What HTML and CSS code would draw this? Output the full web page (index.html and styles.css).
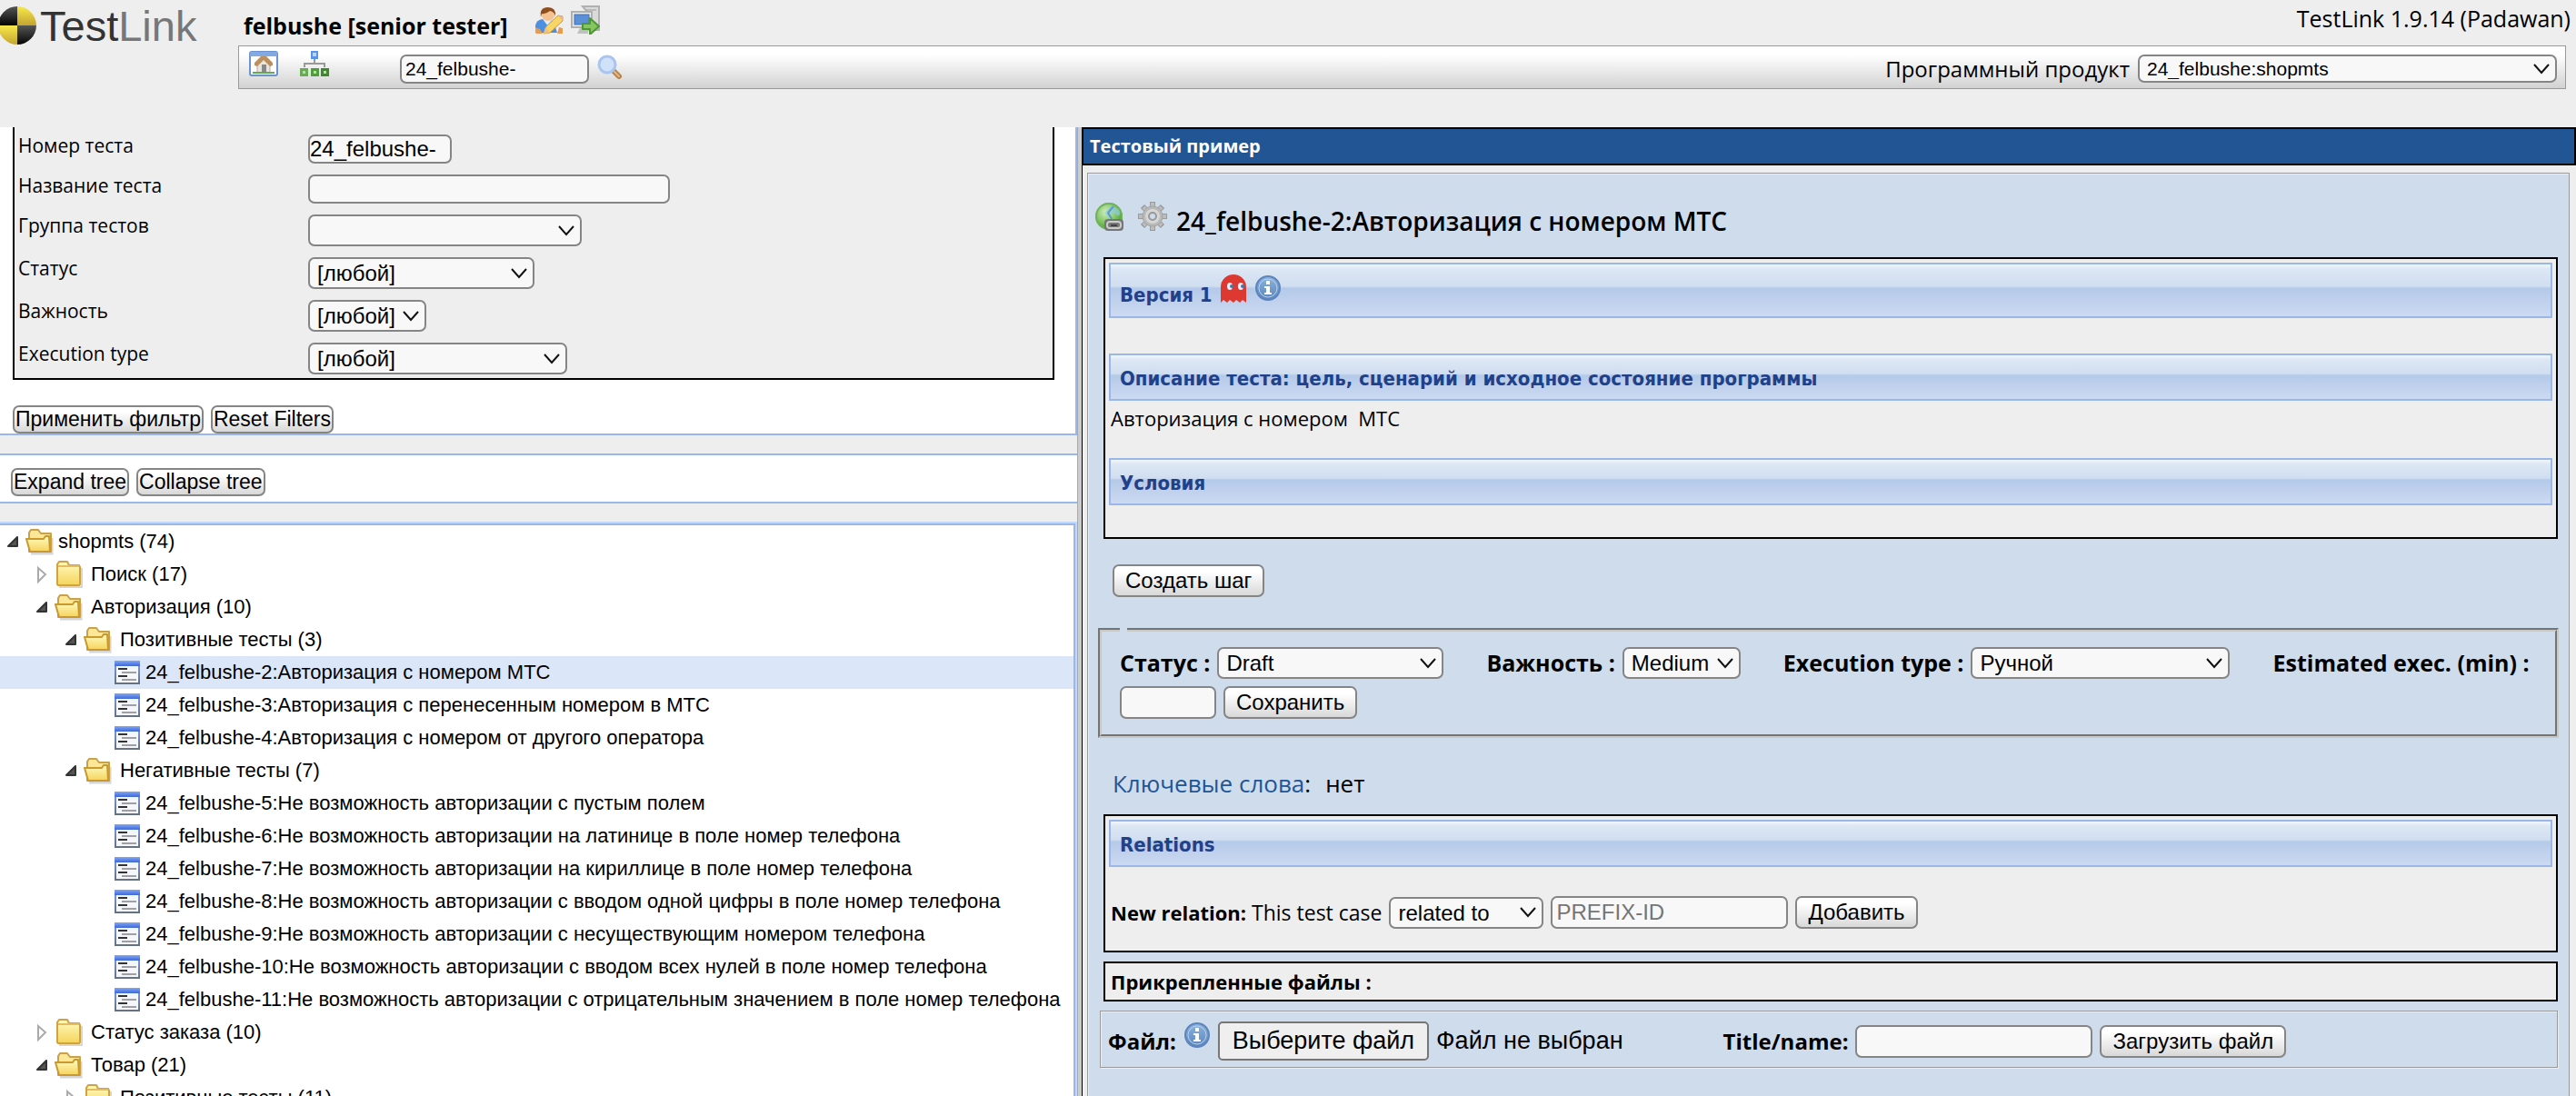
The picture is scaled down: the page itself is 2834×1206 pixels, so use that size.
FILE: index.html
```html
<!DOCTYPE html>
<html lang="ru">
<head>
<meta charset="utf-8">
<title>TestLink 1.9.14 (Padawan)</title>
<link rel="stylesheet" href="styles.css">
</head>
<body>
<svg class="sprite" aria-hidden="true">
  <defs>
    <linearGradient id="g-yellow" x1="0" y1="0" x2="0" y2="1"><stop offset="0" stop-color="#f7e94a"/><stop offset="1" stop-color="#c3a431"/></linearGradient>
    <linearGradient id="g-black" x1="0" y1="0" x2="0" y2="1"><stop offset="0" stop-color="#555"/><stop offset="1" stop-color="#050505"/></linearGradient>
    <linearGradient id="g-folder" x1="0" y1="0" x2="0" y2="1"><stop offset="0" stop-color="#fffbc0"/><stop offset="1" stop-color="#f5d45c"/></linearGradient>
    <linearGradient id="g-blue" x1="0" y1="0" x2="0" y2="1"><stop offset="0" stop-color="#7fa8f5"/><stop offset="1" stop-color="#3f68d8"/></linearGradient>
    <linearGradient id="g-side" x1="0" y1="0" x2="0" y2="1"><stop offset="0" stop-color="#7f9fe6"/><stop offset="1" stop-color="#64707f"/></linearGradient>
    <linearGradient id="g-info" x1="0" y1="0" x2="0" y2="1"><stop offset="0" stop-color="#8db4dd"/><stop offset="1" stop-color="#5a84bd"/></linearGradient>
    <radialGradient id="g-globe" cx=".4" cy=".35" r=".7"><stop offset="0" stop-color="#d5f0c4"/><stop offset=".6" stop-color="#79bf5c"/><stop offset="1" stop-color="#3f8a34"/></radialGradient>
    <symbol id="i-open" viewBox="0 0 32 32">
      <path d="M6 29h23V12" fill="none" stroke="#bbb" stroke-width="3" opacity=".6"/>
      <path d="M4 27V6l2-3h8l3 4h11v20z" fill="#fbe795" stroke="#c9a14a" stroke-width="2" stroke-linejoin="round"/>
      <path d="M1 13h19l2-3h4l1 17H5z" fill="url(#g-folder)" stroke="#c9992e" stroke-width="2" stroke-linejoin="round"/>
    </symbol>
    <symbol id="i-closed" viewBox="0 0 32 32">
      <path d="M5 30h25V9" fill="none" stroke="#bbb" stroke-width="2" opacity=".6"/>
      <path d="M3 27V5l2-3h9l2 4h11l1 2v19l-1 1H4z" fill="url(#g-folder)" stroke="#cfa245" stroke-width="2" stroke-linejoin="round"/>
      <path d="M4 7h23" stroke="#e3bb62" stroke-width="2"/>
    </symbol>
    <symbol id="i-case" viewBox="0 0 32 28">
      <rect x="2" y="1" width="28" height="26" fill="url(#g-side)"/>
      <rect x="4" y="7" width="24" height="18" fill="#f3f6fb"/>
      <rect x="2" y="1" width="28" height="6" fill="url(#g-blue)"/>
      <path d="M6 10h10M6 18h10" stroke="#333" stroke-width="2"/>
      <path d="M10 14h16M10 22h16" stroke="#a0a0a0" stroke-width="2"/>
    </symbol>
    <symbol id="i-expanded" viewBox="0 0 32 32"><path d="M19 11v10H9z" fill="#555" stroke="#333" stroke-width="2" stroke-linejoin="round"/></symbol>
    <symbol id="i-collapsed" viewBox="0 0 32 32"><path d="M10 9v15l8-8z" fill="#fff" stroke="#aaa" stroke-width="2"/></symbol>
    <symbol id="i-info" viewBox="0 0 30 30">
      <circle cx="15" cy="15" r="13" fill="url(#g-info)" stroke="#5c85bd" stroke-width="2"/>
      <circle cx="15" cy="15" r="10" fill="none" stroke="#b9d2ec" stroke-width="1"/>
      <path d="M13 7h4v4h-4zM11 13h6v7h2v2h-8v-2h2v-5h-2z" fill="#fff"/>
    </symbol>
    <symbol id="i-link" viewBox="0 0 32 32">
      <path d="M16 1a15 15 0 1 0 0 30h15V16A15 15 0 0 0 16 1z" fill="url(#g-globe)"/>
      <path d="M19 4l-8 8 4 5 6-5 6 4 2-6z" fill="#8fcbe4" opacity=".7"/>
      <path d="M19 19l-4-7 6-7" fill="none" stroke="#5c9cc0" stroke-width="2"/>
      <circle cx="16" cy="16" r="14" fill="none" stroke="#6fb558" stroke-width="2"/>
      <rect x="11" y="19" width="21" height="13" rx="4" fill="#777"/>
      <rect x="14" y="22" width="15" height="7" rx="3" fill="none" stroke="#ccc" stroke-width="2"/>
      <path d="M18 26h7" stroke="#444" stroke-width="2"/>
    </symbol>
    <symbol id="i-gear" viewBox="0 0 32 32">
      <path d="M16 0v32M0 16h32M5 5l22 22M27 5L5 27" fill="none" stroke="#9a9a9a" stroke-width="6"/>
      <path d="M16 1v30M1 16h30M6 6l20 20M26 6L6 26" fill="none" stroke="#bdbdbd" stroke-width="4"/>
      <circle cx="16" cy="16" r="11" fill="#b9b9b9" stroke="#a5a5a5" stroke-width="1"/>
      <circle cx="16" cy="16" r="8" fill="#d6d6d6"/>
      <circle cx="16" cy="16" r="4" fill="#cfdcec" stroke="#999" stroke-width="2"/>
    </symbol>
    <symbol id="i-ghost" viewBox="0 0 28 31">
      <path d="M0 31V14A14 14 0 0 1 28 14V31l-4-3-3 3-4-3-3 3-4-3-3 3-4-3z" fill="#dd3931"/>
      <ellipse cx="10" cy="13" rx="3" ry="4" fill="#eef"/><ellipse cx="22" cy="13" rx="3" ry="4" fill="#eef"/>
      <circle cx="12" cy="13" r="2" fill="#3b7ba8"/><circle cx="24" cy="13" r="2" fill="#3b7ba8"/>
    </symbol>
    <symbol id="i-user" viewBox="0 0 32 32">
      <path d="M1 30V22q1-6 8-7l12 2 4 13z" fill="#4d8fe0"/>
      <path d="M9 15l6 8 4-7z" fill="#dcecff"/>
      <path d="M1 30v-6l5 2 3 5H2z" fill="#e59c50"/>
      <circle cx="15" cy="10" r="7" fill="#f5c391"/>
      <path d="M7 13Q5 2 15 2q9 0 8 10-1-5-6-6-5 4-9 3z" fill="#8f4f1d"/>
      <path d="M13 23L26 11l5 1 0 5-14 13-7 1z" fill="#f8d567" stroke="#d19a35" stroke-width="1"/>
      <path d="M10 31l2-7 5 6z" fill="#f0bd8c"/>
      <path d="M26 11l5 1v5z" fill="#efb392"/>
      <path d="M27 24l4 1v6h-6z" fill="#e59c50"/>
    </symbol>
    <symbol id="i-logout" viewBox="0 0 32 32">
      <path d="M13 1h18v26H18V7z" fill="#dadada" stroke="#b0b0b0" stroke-width="2"/>
      <path d="M17 5h11" stroke="#999" stroke-width="1"/>
      <rect x="1" y="7" width="22" height="17" fill="#ececec" stroke="#b0b0b0" stroke-width="2"/>
      <rect x="4" y="10" width="16" height="11" fill="#5b8fd6" stroke="#4573b8" stroke-width="1"/>
      <path d="M7 31l3-6h9v6z" fill="#c0c0c0"/>
      <path d="M13 20h8v-6l10 9-10 9v-6h-8z" fill="#86c660" stroke="#4f9638" stroke-width="2" stroke-linejoin="round"/>
    </symbol>
    <symbol id="i-home" viewBox="0 0 32 28">
      <rect x="1" y="1" width="30" height="26" rx="2" fill="#fff" stroke="#6c93cf" stroke-width="2"/>
      <rect x="1" y="1" width="30" height="5" fill="#82a9e0"/>
      <path d="M9 14v10h14V14l-7-7z" fill="#e9e4dc" stroke="#aaa"/>
      <path d="M6 16v-3l7-7h6l7 7v3l-3 1-7-7-7 7z" fill="#bd8f5c"/>
      <path d="M4 24h24" stroke="#63ac4e" stroke-width="2"/>
      <path d="M14 15h5v9h-5z" fill="#888"/>
    </symbol>
    <symbol id="i-map" viewBox="0 0 32 28">
      <path d="M16 9v5M5 18v-4h22v4" fill="none" stroke="#999" stroke-width="2"/>
      <rect x="12" y="0" width="8" height="9" fill="#5b93e6"/><rect x="14" y="2" width="4" height="4" fill="#b9d4fa"/>
      <rect x="0" y="19" width="9" height="9" fill="#67ac55"/><rect x="12" y="19" width="9" height="9" fill="#4f9e3b"/><rect x="23" y="19" width="9" height="9" fill="#3b8a29"/>
      <path d="M3 22h3v3H3zM15 22h3v3h-3zM26 22h3v3h-3z" fill="#b7dda8"/>
    </symbol>
    <symbol id="i-search" viewBox="0 0 28 28">
      <path d="M18 18l6 6" stroke="#b98147" stroke-width="6" stroke-linecap="round"/>
      <path d="M18 18l6 6" stroke="#deb887" stroke-width="2" stroke-linecap="round"/>
      <circle cx="11" cy="11" r="9" fill="#cfe2f9" stroke="#a9c5ef" stroke-width="3"/>
    </symbol>
  </defs>
</svg>

<header class="header">
  <div class="brand">
    <svg class="brand-mark" viewBox="0 0 42 44" aria-hidden="true">
      <path d="M19 22V1A21 21 0 0 1 40 22z" fill="url(#g-yellow)"/>
      <path d="M19 22H-2A21 21 0 0 1 19 1z" fill="url(#g-black)"/>
      <path d="M19 22v21A21 21 0 0 1-2 22z" fill="url(#g-yellow)"/>
      <path d="M19 22h21A21 21 0 0 1 19 43z" fill="url(#g-black)"/>
    </svg>
    <span class="brand-name">Test<span class="brand-tail">Link</span></span>
  </div>
  <div class="header-main">
    <div class="header-top">
      <span class="user">felbushe [senior tester]</span>
      <a class="icon-link" href="#profile" aria-label="Профиль"><svg class="icon"><use href="#i-user"/></svg></a>
      <a class="icon-link" href="#logout" aria-label="Выход"><svg class="icon"><use href="#i-logout"/></svg></a>
      <span class="version">TestLink 1.9.14 (Padawan)</span>
    </div>
    <div class="toolbar">
      <nav class="toolbar-nav">
        <a class="icon-link" href="#home" aria-label="Главная"><svg class="icon-nav"><use href="#i-home"/></svg></a>
        <a class="icon-link" href="#spec" aria-label="Спецификация"><svg class="icon-nav"><use href="#i-map"/></svg></a>
      </nav>
      <input class="field field-search" type="text" value="24_felbushe-" aria-label="Поиск теста">
      <a class="icon-link" href="#search" aria-label="Найти"><svg class="icon-search"><use href="#i-search"/></svg></a>
      <div class="product">
        <label for="product">Программный продукт</label>
        <select class="select select-product" id="product"><option>24_felbushe:shopmts</option></select>
      </div>
    </div>
  </div>
</header>

<div class="frames">
  <aside class="sidebar">
    <form class="filters">
      <div class="filter-grid">
        <label for="f-id">Номер теста</label>
        <input class="field tight w-id" id="f-id" type="text" value="24_felbushe-">
        <label for="f-name">Название теста</label>
        <input class="field tight w-name" id="f-name" type="text">
        <label for="f-group">Группа тестов</label>
        <select class="select w-group" id="f-group"><option></option></select>
        <label for="f-status">Статус</label>
        <select class="select w-status" id="f-status"><option>[любой]</option></select>
        <label for="f-importance">Важность</label>
        <select class="select w-importance" id="f-importance"><option>[любой]</option></select>
        <label for="f-exec">Execution type</label>
        <select class="select w-exec" id="f-exec"><option>[любой]</option></select>
      </div>
      <div class="button-row">
        <button class="button button-tight" type="button">Применить фильтр</button>
        <button class="button button-tight" type="button">Reset Filters</button>
      </div>
    </form>
    <div class="tree-actions">
      <button class="button button-tight" type="button">Expand tree</button>
      <button class="button button-tight" type="button">Collapse tree</button>
    </div>
    <ul class="tree">
      <li class="node root"><svg class="icon twist"><use href="#i-expanded"/></svg><svg class="icon"><use href="#i-open"/></svg><a href="#n">shopmts (74)</a></li>
      <li class="node l1"><svg class="icon twist"><use href="#i-collapsed"/></svg><svg class="icon"><use href="#i-closed"/></svg><a href="#n">Поиск (17)</a></li>
      <li class="node l1"><svg class="icon twist"><use href="#i-expanded"/></svg><svg class="icon"><use href="#i-open"/></svg><a href="#n">Авторизация (10)</a></li>
      <li class="node l2"><svg class="icon twist"><use href="#i-expanded"/></svg><svg class="icon"><use href="#i-open"/></svg><a href="#n">Позитивные тесты (3)</a></li>
      <li class="node leaf selected"><svg class="icon-case"><use href="#i-case"/></svg><a href="#n">24_felbushe-2:Авторизация с номером МТС</a></li>
      <li class="node leaf"><svg class="icon-case"><use href="#i-case"/></svg><a href="#n">24_felbushe-3:Авторизация с перенесенным номером в МТС</a></li>
      <li class="node leaf"><svg class="icon-case"><use href="#i-case"/></svg><a href="#n">24_felbushe-4:Авторизация с номером от другого оператора</a></li>
      <li class="node l2"><svg class="icon twist"><use href="#i-expanded"/></svg><svg class="icon"><use href="#i-open"/></svg><a href="#n">Негативные тесты (7)</a></li>
      <li class="node leaf"><svg class="icon-case"><use href="#i-case"/></svg><a href="#n">24_felbushe-5:Не возможность авторизации с пустым полем</a></li>
      <li class="node leaf"><svg class="icon-case"><use href="#i-case"/></svg><a href="#n">24_felbushe-6:Не возможность авторизации на латинице в поле номер телефона</a></li>
      <li class="node leaf"><svg class="icon-case"><use href="#i-case"/></svg><a href="#n">24_felbushe-7:Не возможность авторизации на кириллице в поле номер телефона</a></li>
      <li class="node leaf"><svg class="icon-case"><use href="#i-case"/></svg><a href="#n">24_felbushe-8:Не возможность авторизации с вводом одной цифры в поле номер телефона</a></li>
      <li class="node leaf"><svg class="icon-case"><use href="#i-case"/></svg><a href="#n">24_felbushe-9:Не возможность авторизации с несуществующим номером телефона</a></li>
      <li class="node leaf"><svg class="icon-case"><use href="#i-case"/></svg><a href="#n">24_felbushe-10:Не возможность авторизации с вводом всех нулей в поле номер телефона</a></li>
      <li class="node leaf"><svg class="icon-case"><use href="#i-case"/></svg><a href="#n">24_felbushe-11:Не возможность авторизации с отрицательным значением в поле номер телефона</a></li>
      <li class="node l1"><svg class="icon twist"><use href="#i-collapsed"/></svg><svg class="icon"><use href="#i-closed"/></svg><a href="#n">Статус заказа (10)</a></li>
      <li class="node l1"><svg class="icon twist"><use href="#i-expanded"/></svg><svg class="icon"><use href="#i-open"/></svg><a href="#n">Товар (21)</a></li>
      <li class="node l2"><svg class="icon twist"><use href="#i-collapsed"/></svg><svg class="icon"><use href="#i-closed"/></svg><a href="#n">Позитивные тесты (11)</a></li>
    </ul>
  </aside>
  <div class="splitter"></div>
  <main class="content">
    <h1 class="page-title">Тестовый пример</h1>
    <div class="panel">
      <div class="case-title">
        <a class="icon-link" href="#link" aria-label="Ссылка"><svg class="icon"><use href="#i-link"/></svg></a>
        <a class="icon-link" href="#actions" aria-label="Действия"><svg class="icon"><use href="#i-gear"/></svg></a>
        <h2>24_felbushe-2:Авторизация с номером МТС</h2>
      </div>

      <section class="box spec">
        <h3 class="bar bar-version">Версия 1 <svg class="icon-ghost"><use href="#i-ghost"/></svg><svg class="icon-info"><use href="#i-info"/></svg></h3>
        <h3 class="bar bar-summary">Описание теста: цель, сценарий и исходное состояние программы</h3>
        <p class="summary">Авторизация с номером&nbsp; МТС</p>
        <h3 class="bar">Условия</h3>
      </section>

      <button class="button create-step" type="button">Создать шаг</button>

      <fieldset class="attributes">
        <legend></legend>
        <div class="attribute-row">
          <div class="attribute"><label for="status">Статус :</label><select class="select w-draft" id="status"><option>Draft</option></select></div>
          <div class="attribute"><label for="importance">Важность :</label><select class="select w-medium" id="importance"><option>Medium</option></select></div>
          <div class="attribute"><label for="exec">Execution type :</label><select class="select w-manual" id="exec"><option>Ручной</option></select></div>
          <label for="estimate">Estimated exec. (min) :</label>
          <input class="field w-estimate" id="estimate" type="text">
          <button class="button" type="button">Сохранить</button>
        </div>
      </fieldset>

      <p class="keywords"><span><a href="#keywords">Ключевые слова</a>:</span><span>нет</span></p>

      <section class="box relations">
        <h3 class="bar">Relations</h3>
        <div class="relation-row">
          <label for="relation"><b>New relation:</b> This test case</label>
          <select class="select w-relation" id="relation"><option>related to</option></select>
          <input class="field w-text" type="text" placeholder="PREFIX-ID" aria-label="PREFIX-ID">
          <button class="button" type="button">Добавить</button>
        </div>
      </section>

      <h3 class="box attachments">Прикрепленные файлы :</h3>

      <form class="upload">
        <label for="file">Файл:</label>
        <svg class="icon-info upload-info"><use href="#i-info"/></svg>
        <div class="picker">
          <label class="picker-button" for="file">Выберите файл</label>
          <span>Файл не выбран</span>
          <input class="picker-input" id="file" type="file">
        </div>
        <label for="title">Title/name:</label>
        <input class="field w-text" id="title" type="text">
        <button class="button" type="button">Загрузить файл</button>
      </form>
    </div>
  </main>
</div>
</body>
</html>
```
FILE: styles.css
```css
:root {
  --ui: "Open Sans", "Noto Sans", sans-serif;
  --control: "Liberation Sans", Arial, sans-serif;
  --heading: "DejaVu Sans Condensed", "DejaVu Sans", sans-serif;
  --line: #99b8e8;
  --edge: #858585;
  --grey: #eee;
  --blue: #225594;
}

* { box-sizing: border-box; }

body {
  margin: 0;
  height: 100vh;
  display: flex;
  flex-direction: column;
  overflow: hidden;
  background: var(--grey);
  color: #000;
  font-family: var(--ui);
  font-size: 22px;
}

h1, h2, h3, p, ul { margin: 0; padding: 0; }
svg { display: block; flex: none; }
a { color: inherit; text-decoration: none; }

.sprite { position: absolute; width: 0; height: 0; }
.icon { width: 32px; height: 32px; }
.icon-case { width: 32px; height: 28px; }
.icon-nav { width: 32px; height: 28px; }
.icon-search { width: 28px; height: 28px; }
.icon-ghost { width: 28px; height: 31px; }
.icon-info { width: 30px; height: 30px; }

/* Controls */
.field, .select, .button {
  margin: 0;
  border: 2px solid var(--edge);
  border-radius: 7px;
  color: #000;
  font-family: var(--control);
  font-size: 24px;
}

.field {
  height: 36px;
  padding: 0 4px;
  background: #f8f8f8;
}

.field::placeholder { color: #757575; }

.field.tight { height: 32px; padding: 0; }

.select {
  appearance: none;
  height: 35px;
  padding: 0 32px 0 8px;
  background: #f8f8f8 url("data:image/svg+xml,%3Csvg xmlns='http://www.w3.org/2000/svg' width='18' height='12'%3E%3Cpath d='M1 1l8 9 8-9' fill='none' stroke='%23111' stroke-width='2'/%3E%3C/svg%3E") no-repeat right 6px center;
}

.button {
  height: 36px;
  padding: 0 12px;
  background: linear-gradient(#fff 20%, #d8d8d8);
  white-space: nowrap;
}

.button-tight { height: 31px; padding: 0 1px; font-size: 23px; line-height: 27px; }

/* Header */
.header { display: flex; height: 140px; flex: none; }

.brand { display: flex; align-items: flex-start; width: 262px; flex: none; padding-top: 6px; }
.brand-mark { width: 42px; height: 44px; }

.brand-name {
  padding-left: 2px;
  font-family: var(--control);
  font-size: 47px;
  line-height: 46px;
  color: #333;
}

.brand-tail { color: #777; }

.header-main { flex: 1; min-width: 0; }

.header-top { display: flex; align-items: flex-start; height: 50px; padding: 0 6px; }
.header-top .icon-link { margin: 6px 8px 0 0; }
.user { margin-right: 29px; font-size: 25px; font-weight: 700; line-height: 56px; }
.version { margin-left: auto; font-size: 25px; line-height: 40px; }

.toolbar {
  display: flex;
  align-items: center;
  height: 48px;
  margin-right: 11px;
  padding: 3px 9px 0 11px;
  border: 1px solid #999;
  background: linear-gradient(#fff 20%, #d2d2d2);
}

.toolbar-nav { display: flex; gap: 24px; align-self: flex-start; width: 166px; padding-top: 2px; }
.field-search { width: 208px; height: 32px; margin-right: 9px; font-size: 21px; }
.toolbar .icon-search { margin-bottom: 4px; }
.product { display: flex; align-items: center; gap: 9px; margin-left: auto; font-size: 24px; }
.select-product { width: 461px; height: 31px; font-size: 21px; }

/* Frames */
.frames {
  display: grid;
  grid-template-columns: minmax(0, 1185fr) 5px minmax(0, 1644fr);
  flex: 1;
  min-height: 0;
}

.splitter { border-left: 1px solid #aaa; background: #ccc; }

.sidebar { display: flex; flex-direction: column; min-height: 0; overflow: hidden; }

.filters {
  padding: 0 23px 0 14px;
  border-right: 2px solid var(--line);
  border-bottom: 2px solid var(--line);
  background: #fff;
}

.filter-grid {
  display: grid;
  grid-template-columns: 319px 1fr;
  gap: 12px 0;
  align-items: start;
  justify-items: start;
  padding: 8px 4px 4px;
  border: 2px solid #000;
  border-top: 0;
  background: var(--grey);
  font-size: 21px;
  line-height: 24px;
}

.w-id { width: 158px; }
.w-name { width: 398px; }
.w-group { width: 301px; }
.w-status { width: 249px; }
.w-importance { width: 130px; }
.w-exec { width: 285px; }

.button-row { display: flex; gap: 8px; margin-top: 28px; }

.tree-actions {
  display: flex;
  gap: 8px;
  margin: 20px 0;
  padding: 14px 12px 6px;
  border-top: 2px solid var(--line);
  border-bottom: 2px solid var(--line);
  background: #fff;
}

.tree {
  flex: 1;
  min-height: 0;
  overflow: hidden;
  list-style: none;
  border-top: 2px solid var(--line);
  border-right: 2px solid var(--line);
  outline: 2px solid #c3d8f8;
  margin: 2px 2px 0 0;
  background: #fff;
  font-family: var(--control);
}

.tree .node {
  display: flex;
  align-items: center;
  gap: 8px;
  height: 36px;
  line-height: 36px;
  white-space: nowrap;
}

.twist { margin-right: -12px; }
.tree .root { gap: 4px; }
.root .twist { margin-right: -8px; }
.l1 { padding-left: 32px; }
.l2 { padding-left: 64px; }
.tree .leaf { gap: 4px; padding-left: 124px; }
.selected { background: #dbe6f8; }

/* Test case */
.content {
  display: flex;
  flex-direction: column;
  min-height: 0;
  overflow: hidden;
  border-left: 1px solid #000;
}

.page-title {
  flex: none;
  height: 42px;
  padding-left: 7px;
  border: 2px solid #000;
  border-left-width: 1px;
  background: var(--blue);
  color: #fff;
  font-size: 20px;
  line-height: 38px;
}

.panel {
  flex: 1;
  min-height: 0;
  margin: 8px 7px 0 5px;
  border: 1px solid #999;
  border-bottom: 0;
  box-shadow: inset 1px 1px #eee;
  background: #cfdcec;
}

.case-title { display: flex; align-items: flex-start; gap: 16px; padding: 31px 7px 19px; }
.case-title h2 { margin-left: -6px; font-size: 28px; font-weight: 600; line-height: 42px; }

.box {
  margin: 0 12px 0 17px;
  padding: 4px;
  border: 2px solid #000;
  background: var(--grey);
}

.bar {
  height: 52px;
  padding: 2px 10px 0;
  border: 2px solid var(--line);
  background: linear-gradient(#f2f6fc 0, #dde7f4 5px, #d0def0 42%, #b4cae9 46%, #cdd9f1);
  color: #1f418a;
  font-family: var(--heading);
  font-size: 22px;
  line-height: 48px;
}

.bar-version { display: flex; align-items: flex-start; gap: 9px; height: 61px; padding-top: 11px; line-height: 46px; }
.bar-summary { margin-top: 39px; }
.summary { margin-bottom: 25px; padding-left: 2px; line-height: 38px; }
.spec { padding-bottom: 35px; }

.create-step { display: block; margin: 28px 0 34px 27px; }

.attributes {
  min-width: 0;
  margin: 0 11px;
  padding: 17px 20px;
  border: 4px groove #c8c8c8;
}

.attributes legend { width: 8px; height: 0; padding: 0; }

.attribute-row {
  display: flex;
  flex-wrap: wrap;
  align-items: center;
  gap: 8px;
  font-size: 25px;
  font-weight: 700;
  line-height: 35px;
}

.attribute { display: flex; gap: 8px; margin-right: 39px; }

.w-draft { width: 249px; }
.w-medium { width: 130px; }
.w-manual { width: 285px; }
.w-estimate { width: 106px; }
.w-relation { width: 170px; }
.w-text { width: 261px; }

.keywords { display: flex; gap: 16px; margin: 32px 27px 16px; font-size: 26px; line-height: 36px; }
.keywords a { color: var(--blue); font-weight: 500; }

.relations { padding-bottom: 24px; }
.relation-row { display: flex; align-items: center; gap: 8px; margin-top: 32px; padding-left: 2px; font-size: 23px; line-height: 36px; }
.relation-row b { font-size: 22px; }

.attachments {
  height: 44px;
  margin-top: 10px;
  padding: 0 6px;
  font-size: 22px;
  line-height: 40px;
}

.upload {
  display: flex;
  align-items: center;
  gap: 8px;
  height: 63px;
  margin: 10px 12px 0 13px;
  padding: 4px 8px 0;
  border: 1px solid #999;
  box-shadow: inset 1px 1px #eee, 1px 1px #eee;
  font-size: 24px;
  font-weight: 700;
}

.upload-info { margin-bottom: 13px; }

.picker {
  position: relative;
  display: flex;
  align-items: center;
  gap: 8px;
  margin-right: 102px;
  font-family: var(--control);
  font-size: 27px;
  font-weight: 400;
}

.picker-button {
  height: 43px;
  padding: 0 14px;
  border: 2px solid #767676;
  border-radius: 5px;
  background: #efefef;
  line-height: 39px;
}

.picker-input { position: absolute; inset: 0; width: 100%; opacity: 0; }
```
